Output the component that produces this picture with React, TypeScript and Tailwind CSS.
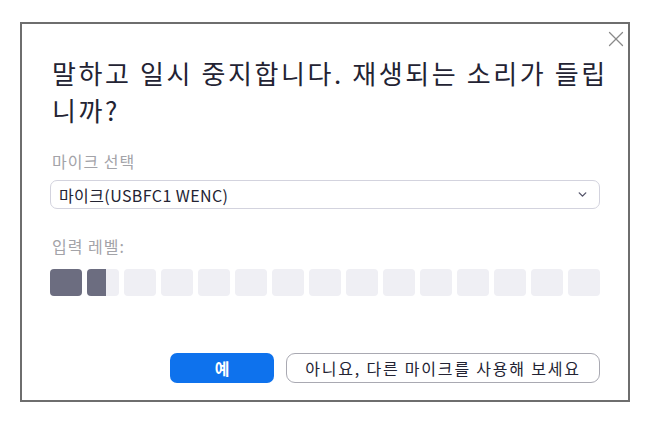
import { ChevronDown, X } from 'lucide-react';

const LEVELS = [1, 0.58, 0, 0, 0, 0, 0, 0, 0, 0, 0, 0, 0, 0, 0];

function LevelBar({ fill }: { fill: number }) {
    return (
        <div className="flex-1 h-[27px] rounded-[4px] bg-[#efeff4] overflow-hidden">
            {fill > 0 && (
                <div className="h-full bg-[#6c6d80]" style={{ width: `${fill * 100}%` }} />
            )}
        </div>
    );
}

export default function App() {
    return (
        <div className="w-[650px] h-[435px] bg-white pt-[22px] pl-[20px] font-['Noto_Sans_CJK_KR','Noto_Sans',sans-serif]">
            <div className="relative w-[610px] h-[380px] border-2 border-[#6e6e6e] bg-white px-[28px] flex flex-col">
                <button className="absolute top-[2px] right-[-1px] text-[#8a8a8a]">
                    <X size={26} strokeWidth={1.2} />
                </button>

                <h1 className="mt-[30px] pl-[2px] whitespace-nowrap text-[26px] leading-[37px] tracking-[2.6px] text-[#232333] font-normal">
                    말하고 일시 중지합니다. 재생되는 소리가 들립
                    <br />
                    니까?
                </h1>

                <p className="mt-[22px] pl-[2px] text-[16px] leading-[22px] tracking-[1px] text-[#a3a3a8]">마이크 선택</p>
                <div className="mt-[8px] h-[29px] rounded-[7px] border border-[#d3d3de] flex items-center justify-between pl-[8px] pr-[10px]">
                    <span className="text-[16px] tracking-[0.4px] text-[#232333]">마이크(USBFC1 WENC)</span>
                    <ChevronDown size={13} strokeWidth={2.6} className="text-[#55556a]" />
                </div>

                <p className="mt-[26px] pl-[2px] text-[16px] leading-[22px] tracking-[1px] text-[#a3a3a8]">입력 레벨:</p>
                <div className="mt-[12px] flex gap-[5px]">
                    {LEVELS.map((l, i) => (
                        <LevelBar key={i} fill={l} />
                    ))}
                </div>

                <div className="mt-auto mb-[17px] flex justify-end gap-[12px]">
                    <button className="w-[104px] h-[30px] rounded-[7px] bg-[#0e72ed] text-white text-[16px] font-bold">
                        예
                    </button>
                    <button className="w-[314px] h-[30px] rounded-[9px] border-[1.5px] border-[#a9a9b2] bg-white text-[16px] tracking-[1.8px] text-[#232333]">
                        아니요, 다른 마이크를 사용해 보세요
                    </button>
                </div>
            </div>
        </div>
    );
}
